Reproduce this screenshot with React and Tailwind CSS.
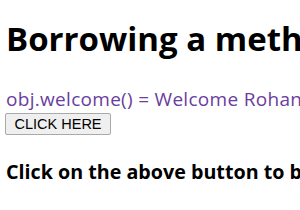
export default function App() {
  return (
    <div className="min-h-screen bg-white px-[6px] text-black overflow-hidden" style={{ fontFamily: '"Open Sans", "Noto Sans", sans-serif' }}>
      <h1 className="pt-[19px] text-[33px] leading-[40px] font-bold whitespace-nowrap">Borrowing a method</h1>
      <div className="mt-[28px] text-[19px] leading-[24px] text-[#6a3d9e] whitespace-nowrap tracking-[0.3px]">obj.welcome() = Welcome Rohan</div>
      <button className="-ml-[1px] mt-[2px] h-[22px] px-[8.5px] text-[14.5px] leading-[20px] text-black bg-[#efefef] border border-[#a9a9a9] rounded-[2px]" style={{ fontFamily: '"Liberation Sans", Arial, sans-serif' }}>CLICK HERE</button>
      <h3 className="mt-[24px] text-[19.7px] leading-[26px] font-bold whitespace-nowrap">Click on the above button to borrow the method</h3>
    </div>
  );
}
